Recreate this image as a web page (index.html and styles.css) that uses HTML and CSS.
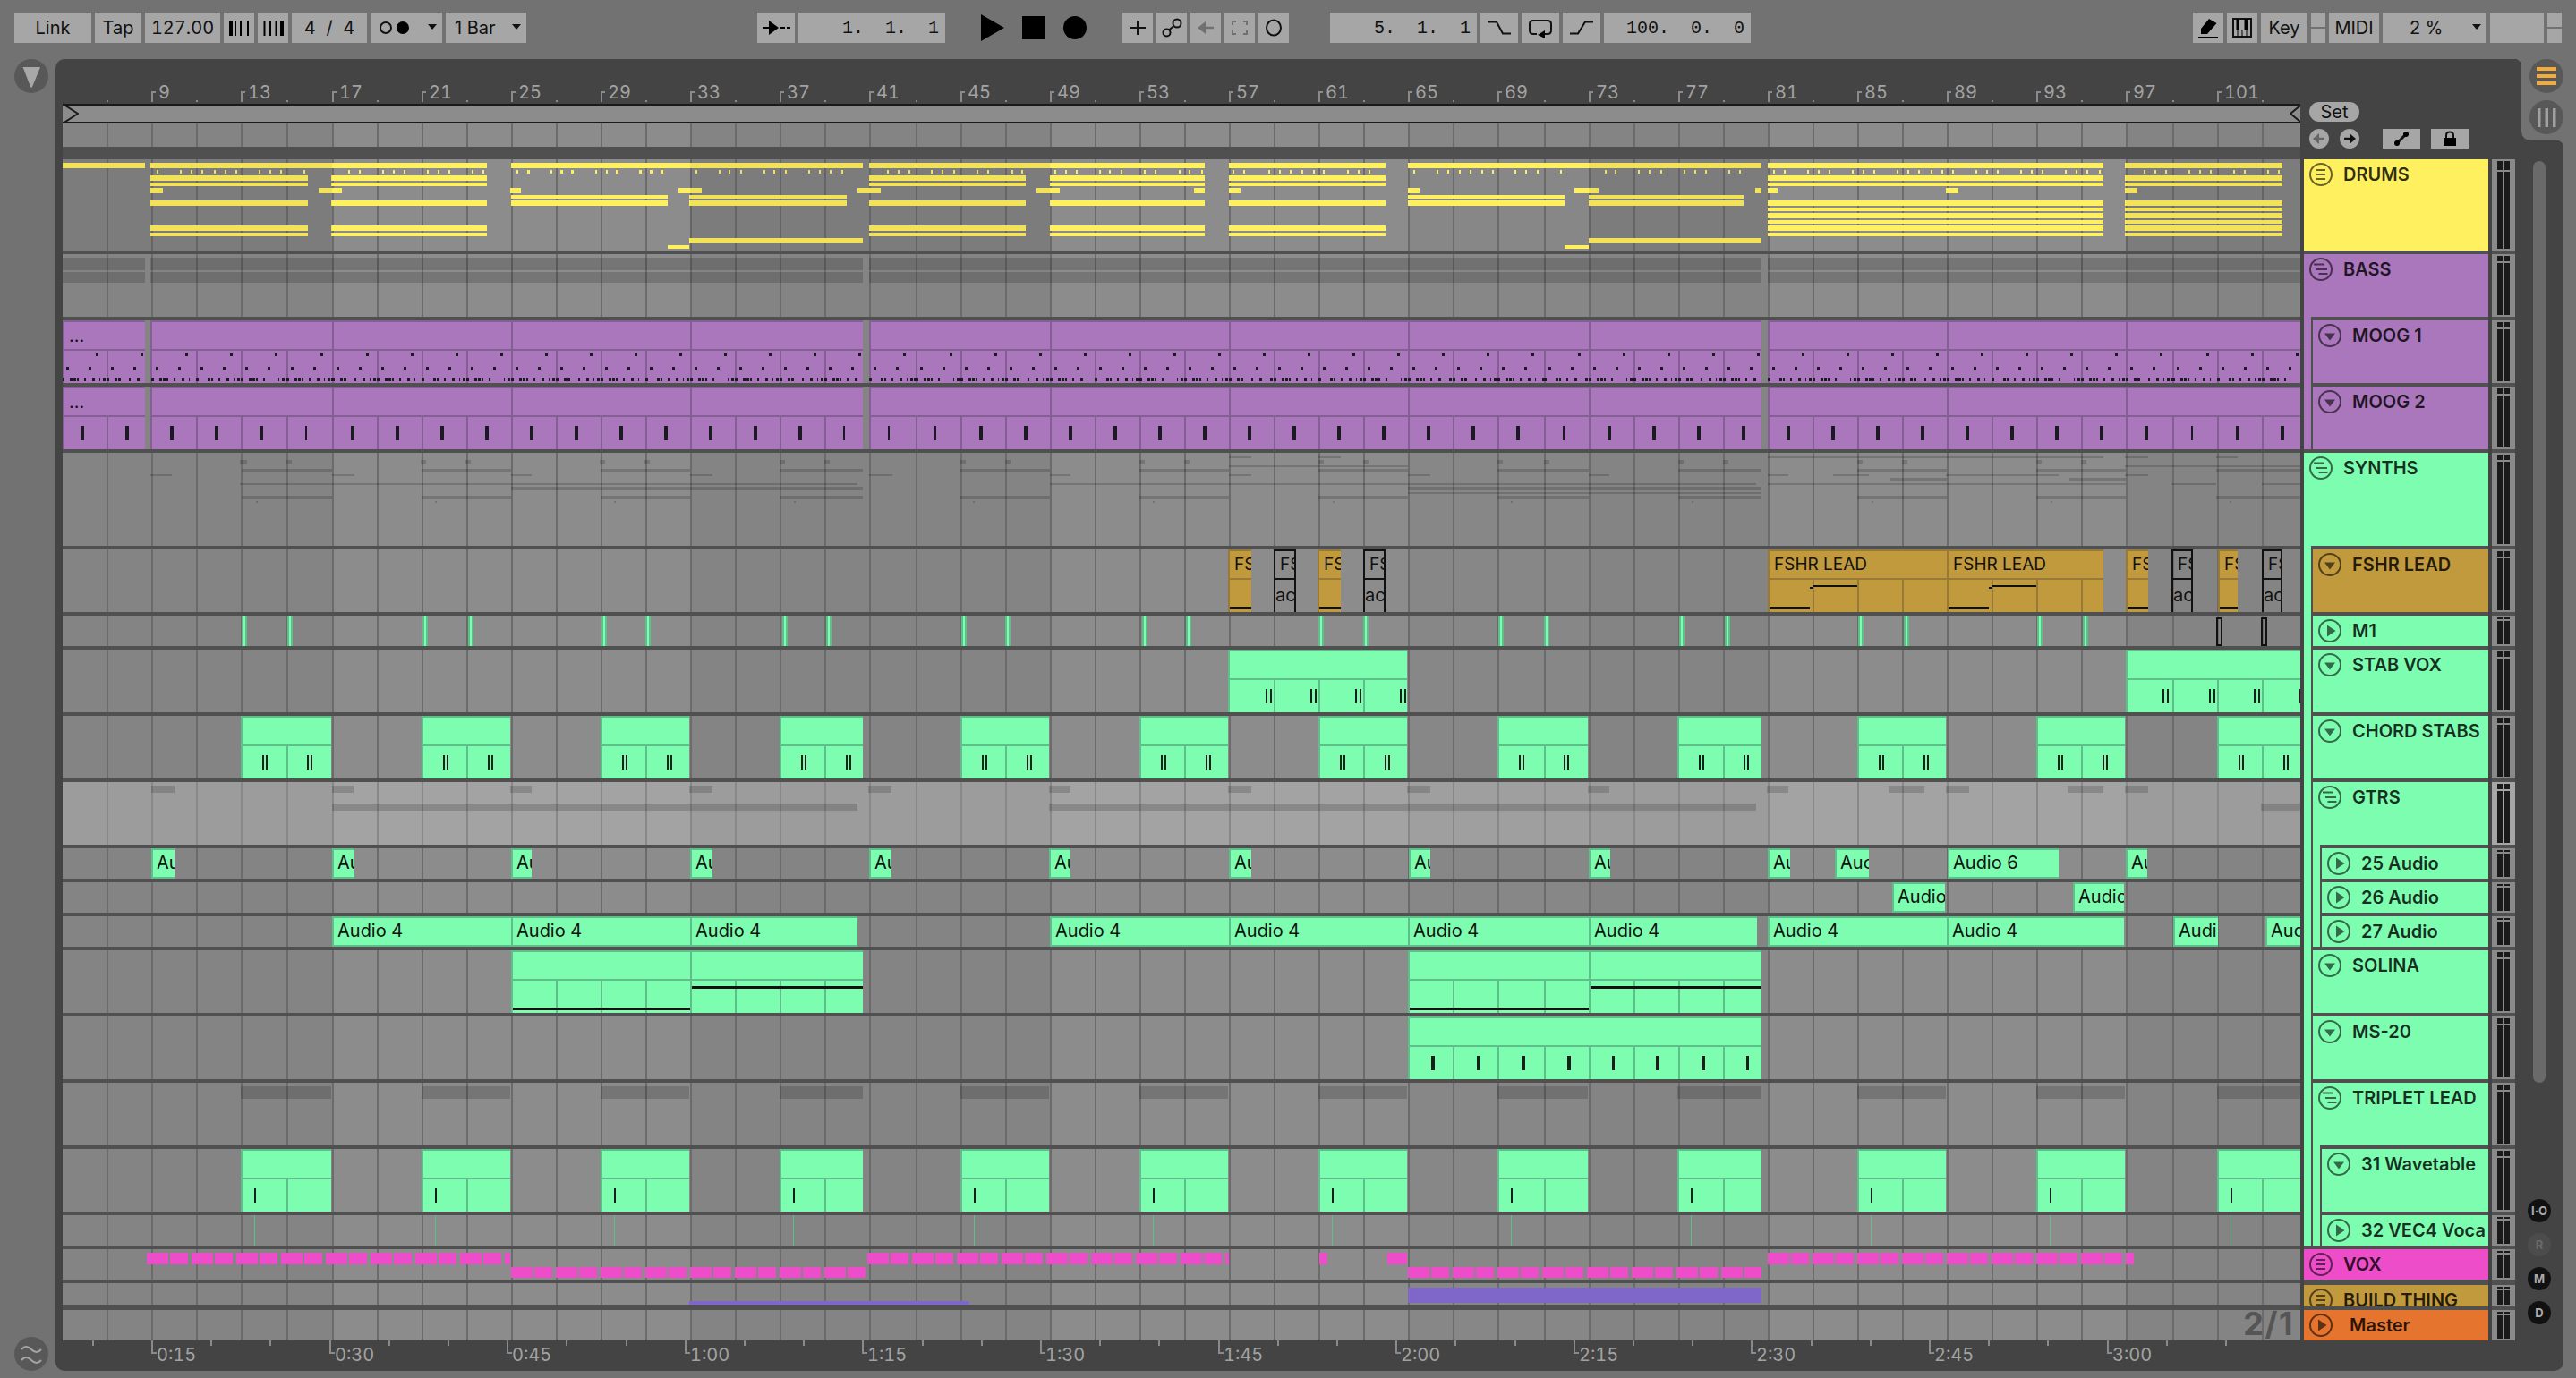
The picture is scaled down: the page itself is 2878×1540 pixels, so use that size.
FILE: index.html
```html
<!DOCTYPE html>
<html lang="en">
<head>
<meta charset="utf-8">
<title>Arrangement View</title>
<link rel="stylesheet" href="styles.css">
</head>
<body>
<svg class="defs" aria-hidden="true">
  <symbol id="ic-eq" viewBox="0 0 26 26"><ellipse cx="13" cy="13" rx="12" ry="12" fill="none" stroke="currentColor" stroke-width="2"/><path d="M8 8h10M8 13h10M8 18h10" stroke="currentColor" stroke-width="2" fill="none"/></symbol>
  <symbol id="ic-st" viewBox="0 0 26 26"><ellipse cx="13" cy="13" rx="12" ry="12" fill="none" stroke="currentColor" stroke-width="2"/><path d="M5 7.500h12M8 13h12M10.500 18h10" stroke="currentColor" stroke-width="2" fill="none"/></symbol>
  <symbol id="ic-dn" viewBox="0 0 26 26"><ellipse cx="13" cy="13" rx="12" ry="12" fill="none" stroke="currentColor" stroke-width="2"/><path d="M7 10.500h12l-6 8z" fill="currentColor"/></symbol>
  <symbol id="ic-pl" viewBox="0 0 26 26"><ellipse cx="13" cy="13" rx="12" ry="12" fill="none" stroke="currentColor" stroke-width="2"/><path d="M10 6.500l9.500 6.500-9.500 6.500z" fill="currentColor"/></symbol>
</svg>
<div class="app">
  <header class="toolbar">
    <div class="btn w86">Link</div>
    <div class="btn w52">Tap</div>
    <div class="btn w84 tnum">127.00</div>
    <div class="btn w34"><svg width="34" height="34"><path d="M6 9h4v17H6zM12 9h2v17h-2zM18 9h2v17h-2zM26 9h2v17h-2z"/></svg></div>
    <div class="btn w34"><svg width="34" height="34"><path d="M6.500 9h2v17h-2zM13 9h2v17h-2zM19.500 9h2v17h-2zM25 9h4v17h-4z"/></svg></div>
    <div class="btn w84 spaced">4 / 4</div>
    <div class="btn w80 drop"><svg width="34" height="14"><circle cx="7" cy="7" r="6" fill="none" stroke="#111" stroke-width="2"/><circle cx="26" cy="7" r="7"/></svg><i class="tri"></i></div>
    <div class="btn w90 drop">1 Bar<i class="tri"></i></div>
    <div class="btn w42 mA"><svg width="42" height="34"><path d="M6 16h9v2H6zM26 16h5v2h-5zM33 16h4v2h-4z"/><path d="M13 9l11 8-11 8z"/></svg></div>
    <div class="btn w164 pos">1.  1.  1</div>
    <div class="transport">
      <svg width="26" height="30"><path d="M0 0l26 15L0 30z"/></svg>
      <svg width="26" height="26"><rect width="26" height="26"/></svg>
      <svg width="26" height="26"><circle cx="13" cy="13" r="13"/></svg>
    </div>
    <div class="btn w34"><svg width="34" height="34"><path d="M17 9v16M9 17h17" stroke="#111" stroke-width="2"/></svg></div>
    <div class="btn w34"><svg width="34" height="34" fill="none" stroke="#111" stroke-width="2"><circle cx="11.500" cy="22.500" r="4"/><circle cx="23" cy="12" r="4.500"/><path d="M14 19.500l6-5"/></svg></div>
    <div class="btn w34"><svg width="34" height="34"><path d="M14 17h12" stroke="#707070" stroke-width="2.500"/><path d="M8 17l9-7v14z" fill="#707070"/></svg></div>
    <div class="btn w34"><svg width="34" height="34" fill="none" stroke="#707070" stroke-width="2"><path d="M9 14V10h4M21 10h4v4M25 20v4h-4M13 24H9v-4"/></svg></div>
    <div class="btn w34"><svg width="34" height="34"><ellipse cx="17" cy="17" rx="8" ry="8.500" fill="none" stroke="#111" stroke-width="2"/></svg></div>
    <div class="btn w164 pos mB">5.  1.  1</div>
    <div class="btn w42"><svg width="42" height="34" fill="none" stroke="#111" stroke-width="2"><path d="M8 10.500h10l7 13h9"/></svg></div>
    <div class="btn w42"><svg width="42" height="34"><path d="M17 24h-4q-4 0-4-4v-7q0-4 4-4h16q4 0 4 4v7q0 4-4 4h-3" fill="none" stroke="#111" stroke-width="2"/><path d="M18 25l8-5v9z"/></svg></div>
    <div class="btn w42"><svg width="42" height="34" fill="none" stroke="#111" stroke-width="2"><path d="M8 23.500h9l8-13h9"/></svg></div>
    <div class="btn w164 pos">100.  0.  0</div>
    <div class="btn w34 mC"><svg width="34" height="34"><path d="M18 7l8.500 5-10.500 12H9v-6z"/><path d="M6 27h22v2H6z"/></svg></div>
    <div class="btn w34"><svg width="34" height="34"><rect x="7" y="7" width="20" height="20" fill="none" stroke="#111" stroke-width="2"/><path d="M10.500 7h3.500v13h-3.500zM19.500 7H23v13h-3.500zM16.500 20h1v7h-1zM11.500 20h1v7h-1zM21.500 20h1v7h-1z"/></svg></div>
    <div class="btn w52">Key</div>
    <div class="split"><i></i><i></i></div>
    <div class="btn w56">MIDI</div>
    <div class="btn w116 drop pad30">2 %<i class="tri"></i></div>
    <div class="btn w60"></div>
    <div class="split"><i></i><i></i></div>
  </header>

  <main class="main">
    <aside class="leftcol">
      <div class="roundbig"><svg width="38" height="38"><path d="M10 10q-1.500-1 0-1h18q1.500 0 .5 1.500L20 31q-1 1.500-2 0z" fill="#a8a8a8"/></svg></div>
      <div class="roundbig"><svg width="38" height="38" fill="none" stroke="#a5a5a5" stroke-width="2"><path d="M8 14q5-6 11 0t11 0M8 26q5-6 11 0t11 0"/></svg></div>
    </aside>

    <section class="panel">
      <div class="arrcol">
        <div class="ruler" id="ruler"></div>
        <div class="overview">
          <svg class="ov-l" width="18" height="22"><path d="M0 0l17 11L0 22" fill="none" stroke="#1a1a1a" stroke-width="2"/></svg>
          <svg class="ov-r" width="12" height="22"><path d="M12 2L1 11l11 9" fill="none" stroke="#1a1a1a" stroke-width="2"/></svg>
        </div>
        <div class="tracks">
          <div class="bands" id="bands"></div>
          <div class="gridlines" id="gridlines"></div>
          <div class="rows" id="rows"></div>
        </div>
        <div class="timeruler" id="timeruler"></div>
      </div>

      <div class="hcol">
        <div class="hctl">
          <div class="set">Set</div>
          <div class="ctlrow">
            <div class="nav"><svg width="22" height="22"><path d="M9 11h8" stroke="#666" stroke-width="2.500"/><path d="M4 11l7-6v12z" fill="#666"/></svg></div>
            <div class="nav nav2"><svg width="22" height="22"><path d="M5 11h8" stroke="#111" stroke-width="2.500"/><path d="M18 11l-7-6v12z" fill="#111"/></svg></div>
            <div class="sbtn sbtn1"><svg width="42" height="22"><path d="M16 16L26 6" stroke="#111" stroke-width="3"/><circle cx="16" cy="16" r="3"/><circle cx="26" cy="6" r="3"/></svg></div>
            <div class="sbtn"><svg width="42" height="22"><rect x="14" y="10" width="14" height="9"/><path d="M17 10V7q0-3.500 4-3.500t4 3.500v3" fill="none" stroke="#111" stroke-width="2"/></svg></div>
          </div>
        </div>
        <div class="hlist">
          <div class="head h102 t-yellow"><svg class="ico"><use href="#ic-eq"/></svg><span>DRUMS</span></div>
          <div class="grp t-purple">
            <div class="head h70"><svg class="ico"><use href="#ic-st"/></svg><span>BASS</span></div>
            <div class="kids">
              <div class="head h70"><svg class="ico"><use href="#ic-dn"/></svg><span>MOOG 1</span></div>
              <div class="head h70"><svg class="ico"><use href="#ic-dn"/></svg><span>MOOG 2</span></div>
            </div>
          </div>
          <div class="grp t-green">
            <div class="head h104"><svg class="ico"><use href="#ic-st"/></svg><span>SYNTHS</span></div>
            <div class="kids">
              <div class="head h70 t-gold"><svg class="ico"><use href="#ic-dn"/></svg><span>FSHR LEAD</span></div>
              <div class="head h34"><svg class="ico"><use href="#ic-pl"/></svg><span>M1</span></div>
              <div class="head h70"><svg class="ico"><use href="#ic-dn"/></svg><span>STAB VOX</span></div>
              <div class="head h70"><svg class="ico"><use href="#ic-dn"/></svg><span>CHORD STABS</span></div>
              <div class="grp">
                <div class="head h70"><svg class="ico"><use href="#ic-st"/></svg><span>GTRS</span></div>
                <div class="kids">
                  <div class="head h34"><svg class="ico"><use href="#ic-pl"/></svg><span>25 Audio</span></div>
                  <div class="head h34"><svg class="ico"><use href="#ic-pl"/></svg><span>26 Audio</span></div>
                  <div class="head h34"><svg class="ico"><use href="#ic-pl"/></svg><span>27 Audio</span></div>
                </div>
              </div>
              <div class="head h70"><svg class="ico"><use href="#ic-dn"/></svg><span>SOLINA</span></div>
              <div class="head h70"><svg class="ico"><use href="#ic-dn"/></svg><span>MS-20</span></div>
              <div class="grp">
                <div class="head h70"><svg class="ico"><use href="#ic-st"/></svg><span>TRIPLET LEAD</span></div>
                <div class="kids">
                  <div class="head h70"><svg class="ico"><use href="#ic-dn"/></svg><span>31 Wavetable</span></div>
                  <div class="head h34"><svg class="ico"><use href="#ic-pl"/></svg><span>32 VEC4 Voca</span></div>
                </div>
              </div>
            </div>
          </div>
          <div class="head h34 t-mag"><svg class="ico"><use href="#ic-eq"/></svg><span>VOX</span></div>
          <div class="head h24 t-gold"><svg class="ico"><use href="#ic-eq"/></svg><span>BUILD THING</span></div>
          <div class="head h34 t-master"><svg class="ico"><use href="#ic-pl"/></svg><span class="mname">Master</span></div>
        </div>
      </div>

      <div class="mcol">
        <div class="meter h102 mbig"></div>
        <div class="meter h70"></div>
        <div class="meter h70"></div>
        <div class="meter h70"></div>
        <div class="meter h104"></div>
        <div class="meter h70"></div>
        <div class="meter h34 msm"></div>
        <div class="meter h70"></div>
        <div class="meter h70"></div>
        <div class="meter h70 mlite"></div>
        <div class="meter h34 msm"></div>
        <div class="meter h34 msm"></div>
        <div class="meter h34 msm"></div>
        <div class="meter h70"></div>
        <div class="meter h70"></div>
        <div class="meter h70"></div>
        <div class="meter h70"></div>
        <div class="meter h34 msm"></div>
        <div class="meter h34 msm"></div>
        <div class="meter h24 msm"></div>
        <div class="meter h34 msm"></div>
      </div>

      <div class="sidecol">
        <div class="scroll"></div>
        <div class="mini">I·O</div>
        <div class="mini off">R</div>
        <div class="mini">M</div>
        <div class="mini">D</div>
      </div>

      <div class="cap">
        <div class="roundbig"><svg width="38" height="38"><path d="M8 9h22v4H8zM8 17h22v4H8zM8 25h22v4H8z" fill="#f5ab3a"/></svg></div>
        <div class="roundbig"><svg width="38" height="38"><path d="M9 9h3.500v21H9zM17.500 9H21v21h-3.500zM26 9h3.500v21H26z" fill="#a0a0a0"/></svg></div>
      </div>
    </section>
  </main>
</div>
<script src="script.js"></script>
</body>
</html>
```

FILE: styles.css
```css
* { box-sizing: border-box; }
html, body { margin: 0; padding: 0; }
body {
  width: 2878px; height: 1540px; overflow: hidden;
  background: #727272;
  font-family: Inter, "Liberation Sans", sans-serif;
  font-size: 20px; color: #111;
}
.defs { position: absolute; width: 0; height: 0; }
.app { width: 2878px; height: 1540px; display: flex; flex-direction: column; }

/* toolbar */
.toolbar { height: 66px; flex: none; display: flex; align-items: flex-start; gap: 4px; padding: 14px 16px 0; }
.btn { height: 34px; background: #a6a6a6; display: flex; align-items: center; justify-content: center; flex: none; white-space: nowrap; }
.btn svg { display: block; }
.w34 { width: 34px; } .w42 { width: 42px; } .w52 { width: 52px; } .w56 { width: 56px; } .w60 { width: 60px; }
.w80 { width: 80px; } .w84 { width: 84px; } .w86 { width: 86px; } .w90 { width: 90px; } .w116 { width: 116px; } .w164 { width: 164px; }
.tnum { font-variant-numeric: tabular-nums; }
.spaced { word-spacing: 6px; }
.drop { justify-content: space-between; padding: 0 6px 0 10px; }
.pad30 { padding-left: 30px; }
.tri { width: 0; height: 0; border-left: 5px solid transparent; border-right: 5px solid transparent; border-top: 6px solid #111; margin-bottom: 2px; }
.pos { font-family: "Liberation Mono", monospace; white-space: pre; justify-content: flex-end; padding-right: 7px; font-size: 20px; }
.mA { margin-left: 254px; }
.mB { margin-left: 42px; }
.mC { margin-left: 490px; }
.transport { display: flex; align-items: center; gap: 20px; margin: 2px 36px 0 36px; height: 30px; }
.transport svg { display: block; }
.split { width: 16px; height: 34px; display: flex; flex-direction: column; gap: 2px; flex: none; }
.split i { flex: 1; background: #a6a6a6; }

/* body */
.main { flex: 1; display: flex; padding: 0 14px 8px 0; min-height: 0; }
.leftcol { width: 62px; flex: none; display: flex; flex-direction: column; justify-content: space-between; padding-left: 16px; }
.roundbig { width: 38px; height: 38px; border-radius: 50%; background: #585858; flex: none; }
.roundbig svg { display: block; }
.panel { flex: 1; position: relative; display: flex; background: #444; border-radius: 10px 0 10px 10px; padding-left: 8px; }

.arrcol { width: 2500px; flex: none; display: flex; flex-direction: column; }
.ruler { height: 50px; flex: none; position: relative; }
.blabel { position: absolute; top: 25px; line-height: 24px; color: #a2a2a2; font-size: 20px; font-variant-numeric: tabular-nums; }
.btick { position: absolute; top: 36px; width: 5px; height: 12px; border-left: 2px solid #8a8a8a; border-top: 2px solid #8a8a8a; }
.mtick { position: absolute; top: 46px; width: 2px; height: 2px; background: #8a8a8a; }

.overview { height: 22px; flex: none; position: relative; background: #8c8c8c; border-top: 2px solid #1a1a1a; border-bottom: 2px solid #1a1a1a; }
.ov-l { position: absolute; left: 0; top: -2px; }
.ov-r { position: absolute; right: 0; top: -2px; }

.tracks { flex: 1; position: relative; background: #8c8c8c; min-height: 0; }
.gridlines, .bands { position: absolute; inset: 0; pointer-events: none; }
.gline { position: absolute; top: 0; bottom: 0; width: 2px; background: #6b6b6b; }
.band { position: absolute; top: 0; bottom: 0; background: rgba(0, 0, 0, .055); }
.band.soft { background: rgba(0, 0, 0, .03); }
.rows { position: relative; display: flex; flex-direction: column; }
.row { position: relative; flex: none; border-bottom: 4px solid #505050; box-sizing: content-box; }
.rh24 { height: 24px; border-bottom-width: 6px; } .rh26 { height: 26px; border-bottom-width: 14px; }
.rh34 { height: 34px; } .rh70 { height: 70px; } .rh102 { height: 102px; } .rh104 { height: 104px; }
.last { border-bottom: 0; }
.lite { background: rgba(255, 255, 255, .2); }

.n { position: absolute; }
.ny { background: #fff060; }
.nk { background: #1c1824; }
.nb { background: #16201a; }
.ns { background: rgba(0, 0, 0, .16); }
.ng { background: #5fbf8b; }
.nm { background: #ee4dc9; }
.nv { background: #7f67c9; }
.nbar { background: #111; }
.mcore { background: #7dfdb0; border-left: 2px solid #5fbf8b; border-right: 2px solid #5fbf8b; }
.mout { border: 2px solid #111; }

.clip { position: absolute; top: 0; bottom: 0; background: var(--c); border-left: 2px solid var(--d); border-top: 2px solid var(--d); overflow: hidden; display: flex; flex-direction: column; color: #111; line-height: 30px; white-space: nowrap; }
.ct { height: 32px; flex: none; border-bottom: 2px solid var(--d); padding-left: 5px; overflow: hidden; }
.c-gold .ct, .c-out .ct { font-size: 19px; }
.cb { flex: 1; position: relative; padding-left: 0; line-height: 34px; }
.cl { position: absolute; top: 0; bottom: 0; width: 2px; background: var(--d); }
.clip.small { border-bottom: 2px solid var(--d); padding-left: 4px; line-height: 29px; }
.c-purple { --c: #aa76bc; --d: #835f93; }
.c-green { --c: #7dfdb0; --d: #5fbf8b; }
.c-gold { --c: #c29a3e; --d: #97793a; }
.c-out { --c: transparent; --d: #111; border-right: 2px solid #111; }
.big21 { position: absolute; right: 7px; bottom: 6px; font-size: 36px; font-weight: 700; letter-spacing: 1.500px; line-height: 26px; color: #555; }

.timeruler { height: 34px; flex: none; position: relative; }
.ttick { position: absolute; top: 0; width: 2px; height: 6px; background: #8a8a8a; }
.ttick.major { height: 15px; width: 6px; background: none; border-left: 2px solid #8a8a8a; border-bottom: 2px solid #8a8a8a; }
.tlabel { position: absolute; top: 4px; line-height: 24px; color: #a2a2a2; font-variant-numeric: tabular-nums; }

/* headers */
.hcol { width: 206px; flex: none; margin-left: 4px; display: flex; flex-direction: column; }
.hctl { height: 112px; flex: none; padding: 48px 0 0 6px; }
.set { width: 56px; height: 22px; border-radius: 11px; background: #a6a6a6; line-height: 22px; text-align: center; }
.ctlrow { display: flex; margin-top: 8px; gap: 12px; }
.nav { width: 22px; height: 22px; border-radius: 50%; background: #a6a6a6; }
.nav svg, .sbtn svg { display: block; }
.sbtn { width: 42px; height: 22px; background: #a6a6a6; }
.sbtn1 { margin-left: 14px; }

.hlist { display: flex; flex-direction: column; gap: 4px; background: #505050; height: 1320px; }
.grp { background: var(--c); display: flex; flex-direction: column; }
.kids { margin-left: 8px; padding: 4px 0 0 2px; background: #505050; display: flex; flex-direction: column; gap: 4px; }
.t-yellow { --c: #fff060; }
.t-purple { --c: #aa76bc; }
.t-green { --c: #7dfdb0; }
.t-gold { --c: #c29a3e; }
.t-mag { --c: #ee4dc9; }
.t-master { --c: #e5742e; }
.head { display: flex; align-items: flex-start; gap: 12px; padding: 4px 0 0 6px; background: var(--c); overflow: hidden; flex: none; }
.head span { font-weight: 600; line-height: 26px; color: rgba(0, 0, 0, .82); white-space: nowrap; }
.head .mname { margin-left: 7px; }
.ico { width: 26px; height: 26px; flex: none; color: rgba(0, 0, 0, .58); }
.h24 { height: 24px; margin-top: 2px; } .h34 { height: 34px; } .h70 { height: 70px; } .h102 { height: 102px; } .h104 { height: 104px; }

/* meters */
.mcol { width: 26px; flex: none; margin: 112px 0 0 4px; height: 1320px; display: flex; flex-direction: column; gap: 4px; background: #505050; }
.meter { flex: none; --k: linear-gradient(#1a1a1a, #1a1a1a); --g: #8a8a8a; --t: 6px; --u: 10px;
  background:
    var(--k) 6px 2px / 6px var(--t) no-repeat,
    var(--k) 14px 2px / 6px var(--t) no-repeat,
    var(--k) 6px var(--u) / 6px calc(100% - var(--u) - 2px) no-repeat,
    var(--k) 14px var(--u) / 6px calc(100% - var(--u) - 2px) no-repeat,
    var(--g);
}
.mbig { --t: 10px; --u: 14px; }
.msm { --t: 2px; --u: 6px; }
.mlite { --g: #a6a6a6; }

/* side */
.sidecol { width: 54px; flex: none; display: flex; flex-direction: column; padding-top: 114px; }
.scroll { width: 14px; height: 1030px; margin: 0 0 130px 20px; background: #6a6a6a; border-radius: 7px; flex: none; }
.mini { width: 26px; height: 26px; margin: 0 0 12px 14px; border-radius: 50%; background: #111; color: #aaa; font-size: 13px; font-weight: 700; text-align: center; line-height: 26px; flex: none; }
.mini.off { background: #4c4c4c; color: #6a6a6a; }

.cap { position: absolute; top: 0; right: 0; width: 47px; height: 91px; background: #727272; border-bottom-left-radius: 10px; padding-left: 9px; display: flex; flex-direction: column; gap: 8px; }
.cap::before { content: ""; position: absolute; left: -8px; top: 0; width: 8px; height: 8px; background: radial-gradient(circle at 0 100%, transparent 8px, #727272 8.500px); }
.cap::after { content: ""; position: absolute; right: 0; bottom: -8px; width: 8px; height: 8px; background: radial-gradient(circle at 0 100%, transparent 8px, #727272 8.500px); }
```

FILE: script.js
```js
(function () {
  var X0 = 70;
  var GRID = [119,169,219,269,320,371,421,471,521,571,621,671,721,771,821,871,921,971,1023,1073,1123,1173,1223,1273,1323,1373,1423,1473,1523,1573,1623,1673,1725,1775,1825,1875,1925,1975,2025,2075,2125,2175,2225,2275,2325,2375,2427,2477,2527];

  function make(parent, cls, text) {
    var d = document.createElement('div');
    d.className = cls;
    if (text) d.textContent = text;
    parent.appendChild(d);
    return d;
  }

  /* ruler + grid */
  var ruler = document.getElementById('ruler');
  var gl = document.getElementById('gridlines');
  GRID.forEach(function (g, i) {
    make(gl, 'gline').style.left = (g - X0) + 'px';
    if (i % 2 === 1) {
      make(ruler, 'btick').style.left = (g - X0) + 'px';
      make(ruler, 'blabel', String(9 + 4 * ((i - 1) / 2))).style.left = (g - X0 + 8) + 'px';
    } else {
      make(ruler, 'mtick').style.left = (g - X0) + 'px';
    }
  });

  /* shade bands */
  var BANDS = [[70,371],[771,1173],[1775,1975],[2375,2570]];
  var bands = document.getElementById('bands');
  function addBands(parent) {
    BANDS.forEach(function (b) {
      var d = make(parent, 'band');
      d.style.left = (b[0] - X0) + 'px';
      d.style.width = (b[1] - b[0]) + 'px';
    });
  }
  addBands(bands);
  var soft = make(bands, 'band soft');
  soft.style.left = (1573 - X0) + 'px';
  soft.style.width = '202px';

  /* rows */
  var ROWDEF = [['top',26],['drums',102],['bass',70],['moog1',70],['moog2',70],['synths',104],['fshr',70],['m1',34],['stab',70],['chord',70],['gtrs',70],['a25',34],['a26',34],['a27',34],['solina',70],['ms20',70],['triplet',70],['wave',70],['vec',34],['vox',34],['build',24],['master',34]];
  var rowsEl = document.getElementById('rows');
  var R = {};
  var y = 138;
  ROWDEF.forEach(function (def) {
    var el = make(rowsEl, 'row rh' + def[1]);
    R[def[0]] = { el: el, top: y };
    y += def[1] + (def[0] === 'top' ? 14 : def[0] === 'build' ? 6 : 4);
  });
  R.master.el.classList.add('last');
  R.gtrs.el.classList.add('lite');

  function rect(r, cls, x0, x1, y0, y1) {
    var d = make(R[r].el, 'n ' + cls);
    d.style.left = (x0 - X0) + 'px';
    d.style.width = (x1 - x0) + 'px';
    d.style.top = (y0 - R[r].top) + 'px';
    d.style.height = (y1 - y0) + 'px';
    return d;
  }
  function spans(r, cls, y0, y1, list) {
    list.forEach(function (s) { rect(r, cls, s[0], s[1], y0, y1); });
  }
  function clip(r, color, x0, x1, title, lower) {
    var c = make(R[r].el, 'clip ' + color);
    c.style.left = (x0 - X0) + 'px';
    c.style.width = (x1 - x0) + 'px';
    make(c, 'ct', title);
    var b = make(c, 'cb', lower);
    GRID.forEach(function (g) {
      if (g > x0 + 2 && g < x1 - 1) make(b, 'cl').style.left = (g - x0 - 2) + 'px';
    });
    return c;
  }
  function small(r, x0, x1, text) {
    var c = make(R[r].el, 'clip small c-green', text);
    c.style.left = (x0 - X0) + 'px';
    c.style.width = (x1 - x0) + 'px';
  }

  /* DRUMS */
  var B = [[168,344],[370,544],[971,1146],[1173,1346],[1373,1548],[1975,2350],[2374,2550]];
  var L = [[1975,2350],[2374,2550]];
  var H = [[571,746],[770,946],[1573,1748],[1775,1948]];
  spans('drums','ny',182,188,[[70,162],[168,544],[571,964],[971,1346],[1373,1548],[1573,1968],[1975,2350],[2374,2550]]);
  spans('drums','ny',196,202,B);
  spans('drums','ny',204,208,B);
  spans('drums','ny',210,216,[[168,182],[356,382],[570,582],[758,784],[958,984],[1158,1184],[1334,1346],[1373,1386],[1573,1586],[1759,1786],[1961,1968],[1975,1986],[2174,2188],[2374,2388]]);
  spans('drums','ny',218,222,H);
  spans('drums','ny',224,230,B.concat(H));
  spans('drums','ny',232,236,L);
  spans('drums','ny',238,244,L);
  spans('drums','ny',246,250,L);
  spans('drums','ny',252,258,B);
  spans('drums','ny',260,264,B);
  spans('drums','ny',266,272,[[770,964],[1775,1968]]);
  spans('drums','ny',274,278,[[746,770],[1748,1775]]);
  var t1 = [257,316,342,369,401,428,454,513,540,566,625,737,764,822,849,876,934,961,988,1046,1073,1158,1185,1243,1270,1297,1355,1382,1409,1467,1494,1521];
  t1.forEach(function (t) { var x = Math.round(60 + t / 2.24); rect('drums','ny',x,x+2,190,194); });
  var t2 = [40,54,82,94,107,136,149,161,190,203,216,258,286,298,312,341,353,367,395,408,421,436,491,504,517,545,558,572,600,613,642,654,695,708,721,749,761,775,804,817,846,858,873,912,925,955,968,981,995,1009,1022,1051,1064,1077,1131,1160,1173,1187,1200,1214,1227,1255,1268,1282,1310,1364,1377,1405,1418,1432,1460,1473,1486,1515,1528];
  t2.forEach(function (t) { var x = Math.round(540 + t / 1.089); rect('drums','ny',x,x+2,190,194); });
  var t3 = [73,102,192,221,282,311,340,401,430,459,520,548,577,610,639,667,729,757,786,848,876,905,967,995,1024,1057,1176,1204,1233,1294,1323,1351,1413,1442,1503,1532];
  t3.forEach(function (t) { var x = Math.round(1900 + t / 2.376); rect('drums','ny',x,x+2,190,194); });
  addBands(R.drums.el);

  /* BASS group shadow */
  var gs = [[70,162],[168,964],[971,1968],[1975,2570]];
  spans('bass','ns',288,302,gs);
  spans('bass','ns',304,316,gs);

  /* MOOG 1 + 2 */
  var PC = [[70,162],[168,371],[371,571],[571,771],[771,964],[971,1173],[1173,1373],[1373,1573],[1573,1775],[1775,1968],[1975,2175],[2175,2375],[2375,2570]];
  ['moog1','moog2'].forEach(function (r) {
    PC.forEach(function (c, i) { clip(r, 'c-purple', c[0], c[1], i === 0 ? '...' : ''); });
  });
  function inGap(x) { return (x >= 161 && x < 168) || (x >= 963 && x < 971) || (x >= 1967 && x < 1975) || x >= 2569; }
  var P = [69].concat(GRID);
  var dash = [[0,2],[8,11],[12,15],[16,18],[24,26],[33,36],[41,42],[45,48],[49,52]];
  P.forEach(function (p, i) {
    var a = p + 38;
    if (!inGap(a)) rect('moog1','nk',a,a+3,394,398);
    [p + 5, p + 30].forEach(function (b) { if (!inGap(b)) rect('moog1','nk',b,b+3,410,414); });
    dash.forEach(function (s, j) {
      if ((i + j) % 5 === 4 && j % 2) return;
      var x = p + 1 + s[0];
      if (!inGap(x) && !inGap(p + 1 + s[1])) rect('moog1','nk',x,p + 1 + s[1],422,426);
    });
    var m = p + 21;
    if (!inGap(m)) {
      var thin = [241,291,341,942,992,1044,1645,1696,1746,2348,2398,2448].indexOf(m) >= 0;
      rect('moog2','nk',m,m + (thin ? 2 : 4),476,492);
    }
  });

  /* SYNTHS ghost notes */
  var bars = [[270,371],[471,571],[671,771],[871,964],[1072,1173],[1273,1373],[1473,1573],[1673,1775],[1875,1968],[2075,2175],[2275,2375],[2476,2570]];
  spans('synths','ns',510,512,[[1373,1398],[1473,1498],[1975,2350],[2374,2400],[2476,2500]]);
  spans('synths','ns',514,518,[[268,276],[320,326],[470,476],[520,526],[670,676],[720,726],[871,877],[921,927],[1073,1079],[1123,1129],[1273,1279],[1323,1329],[1473,1479],[1523,1529],[1673,1679],[1725,1731],[1875,1881],[1925,1931],[2075,2081],[2125,2131],[2275,2281],[2325,2331]]);
  spans('synths','ns',520,522,[[1373,1573],[2374,2570]]);
  spans('synths','ns',524,528,bars);
  spans('synths','ns',530,532,[[168,192],[371,396],[571,594],[771,796],[971,997],[1173,1196],[1373,1398],[1573,1598],[1775,1798],[1975,1998],[2048,2088],[2174,2300],[2374,2400]]);
  spans('synths','ns',534,538,[[2112,2175],[2312,2375]]);
  spans('synths','ns',540,542,[[268,958],[1173,1962],[1975,2375],[2426,2476],[2527,2570]]);
  spans('synths','ns',544,548,[[571,964],[1573,1968]]);
  spans('synths','ns',550,552,[[1573,1968]]);
  spans('synths','ns',554,558,bars);
  [286,486,686,887,1087,1288,1489,1688,1890,2091,2291,2491].forEach(function (x) { rect('synths','ns',x,x+2,560,562); });

  /* FSHR LEAD */
  [[1372,1398],[1472,1498],[2375,2400],[2478,2500]].forEach(function (c) {
    clip('fshr','c-gold',c[0],c[1],'FS');
    rect('fshr','nbar',c[0]+2,c[1],678,681);
  });
  [[1423,1448],[1523,1548],[2426,2450],[2527,2550]].forEach(function (c) {
    clip('fshr','c-out',c[0],c[1],'FS','ac');
  });
  [[1975,2175],[2175,2350]].forEach(function (c) {
    clip('fshr','c-gold',c[0],c[1],'FSHR LEAD');
    rect('fshr','nbar',c[0]+2,c[0]+47,678,681);
    rect('fshr','nbar',c[0]+47,c[0]+51,656,658);
    rect('fshr','nbar',c[0]+50,Math.min(c[0]+100,c[1]),654,656);
  });

  /* M1 */
  [270,321,472,523,672,721,874,923,1074,1123,1276,1325,1473,1523,1674,1725,1876,1927,2076,2127,2276,2327].forEach(function (x) {
    rect('m1','mcore',x,x+6,688,722);
  });
  [2476,2526].forEach(function (x) { rect('m1','mout',x,x+7,690,722); });

  /* STAB VOX */
  [[1372,1572],[2375,2570]].forEach(function (c) { clip('stab','c-green',c[0],c[1],''); });
  [1373,1423,1473,1523,2375,2427,2477,2527].forEach(function (g) {
    var a = g + 41;
    rect('stab','nb',a,a+2,770,786);
    if (a + 7 <= 2570) rect('stab','nb',a+5,a+7,770,786);
  });

  /* CHORD STABS + 31 WAVETABLE + 32 VEC4 + TRIPLET shadow */
  var chord = [[269,370],[471,570],[671,770],[871,964],[1073,1172],[1273,1372],[1473,1572],[1673,1774],[1874,1968],[2075,2174],[2275,2374],[2477,2570]];
  chord.forEach(function (c) {
    clip('chord','c-green',c[0],c[1],'');
    [24,74].forEach(function (o) {
      var x = c[0] + o;
      rect('chord','nb',x,x+2,844,860);
      rect('chord','nb',x+4,x+6,844,860);
    });
    clip('wave','c-green',c[0],c[1],'');
    rect('wave','nb',c[0]+15,c[0]+17,1328,1344);
    rect('vec','ng',c[0]+15,c[0]+16,1358,1392);
    rect('triplet','ns',c[0],c[1],1214,1228);
  });

  /* GTRS */
  spans('gtrs','ns',878,886,[[169,195],[371,395],[570,594],[770,796],[970,996],[1172,1196],[1372,1398],[1572,1598],[1774,1798],[1974,1998],[2110,2150],[2174,2200],[2310,2350],[2374,2400]]);
  spans('gtrs','ns',898,906,[[371,958],[1172,1962],[2526,2570]]);

  /* AUDIO */
  [[169,195],[371,396],[571,594],[771,796],[971,996],[1172,1196],[1373,1398],[1574,1598],[1775,1799],[1975,2000],[2375,2399]].forEach(function (c) { small('a25',c[0],c[1],'Au'); });
  small('a25',2050,2088,'Auc');
  small('a25',2176,2300,'Audio 6');
  small('a26',2114,2173,'Audio');
  small('a26',2316,2373,'Audio');
  [[371,571],[571,771],[771,958],[1173,1373],[1373,1573],[1573,1775],[1775,1963],[1975,2175],[2175,2373]].forEach(function (c) { small('a27',c[0],c[1],'Audio 4'); });
  small('a27',2428,2478,'Audi');
  small('a27',2531,2570,'Aud');

  /* SOLINA */
  [[571,771,1126],[771,964,1102],[1573,1775,1126],[1775,1968,1102]].forEach(function (c) {
    clip('solina','c-green',c[0],c[1],'');
    rect('solina','nbar',c[0]+2,c[1],c[2],c[2]+3);
  });

  /* MS-20 */
  clip('ms20','c-green',1573,1968,'');
  [1599,1650,1700,1751,1801,1850,1901,1951].forEach(function (x, i) { rect('ms20','nb',x,x+(i % 3 === 1 ? 3 : 4),1180,1196); });

  /* VOX */
  function vox(x0, x1, y0, y1) {
    for (var k = x0; k < x1; k += 50) {
      [[0,24],[26,46]].forEach(function (s) {
        if (k + s[0] < x1) rect('vox','nm',k+s[0],Math.min(k+s[1],x1),y0,y1);
      });
    }
  }
  vox(164,570,1400,1413);
  vox(571,967,1416,1428);
  vox(969,1373,1400,1413);
  rect('vox','nm',1474,1483,1400,1413);
  rect('vox','nm',1550,1572,1400,1413);
  vox(1573,1968,1416,1428);
  vox(1975,2384,1400,1413);

  /* BUILD THING */
  rect('build','nv',770,1083,1454,1458);
  rect('build','nv',1573,1968,1439,1456);

  /* 2/1 */
  make(R.master.el, 'big21', '2/1');

  /* time ruler */
  var tr = document.getElementById('timeruler');
  var labels = ['0:15','0:30','0:45','1:00','1:15','1:30','1:45','2:00','2:15','2:30','2:45','3:00'];
  for (var i = -1; i < 36; i++) {
    var x = 169 + i * 66.2;
    if (x < X0 || x > 2568) continue;
    if (i >= 0 && i % 3 === 0) {
      make(tr, 'ttick major').style.left = Math.round(x - X0) + 'px';
      make(tr, 'tlabel', labels[i / 3]).style.left = Math.round(x - X0 + 6) + 'px';
    } else {
      make(tr, 'ttick').style.left = Math.round(x - X0) + 'px';
    }
  }
})();
```
